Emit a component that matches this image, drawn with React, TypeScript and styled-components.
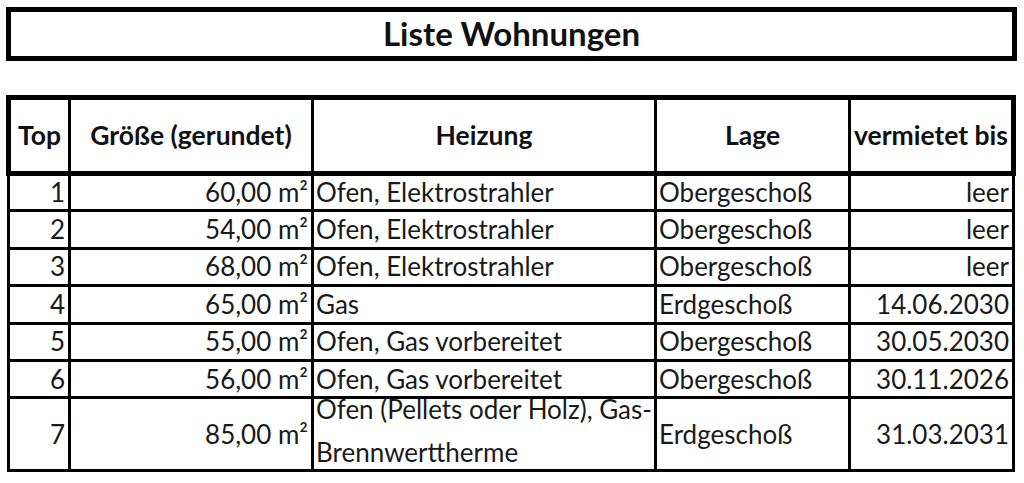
import React from "react";
import styled, { createGlobalStyle } from "styled-components";

const GlobalStyle = createGlobalStyle`
  html, body {
    margin: 0;
    padding: 0;
    background: #ffffff;
  }
  body {
    font-family: Lato, "Open Sans", "Liberation Sans", sans-serif;
    color: #111111;
  }
`;

const Page = styled.div`
  width: 1024px;
  height: 483px;
  box-sizing: border-box;
  padding: 7px 0 0 6px;
  display: flex;
  flex-direction: column;
  gap: 34px;
  overflow: hidden;
`;

const TitleBox = styled.div`
  box-sizing: border-box;
  width: 1011px;
  height: 54px;
  border: 5px solid #000;
  display: flex;
  align-items: center;
  justify-content: center;
  font-weight: 700;
  font-size: 33px;
  line-height: 1.2;
  color: #111;
`;

const Table = styled.table`
  border-collapse: collapse;
  table-layout: fixed;
  width: 1005px;
  margin-left: 0;
  font-size: 26px;
  line-height: 1.2;
`;

const HeadRow = styled.tr`
  height: 76px;
`;

const HeadCell = styled.th`
  border: 3px solid #000;
  border-top-width: 5px;
  border-bottom-width: 5px;
  &:first-child {
    border-left-width: 5px;
  }
  &:last-child {
    border-right-width: 5px;
  }
  padding: 0;
  font-size: 26.5px;
  font-weight: 700;
  text-align: center;
  vertical-align: middle;
  white-space: nowrap;
  color: #111;
`;

const Row = styled.tr<{ $tall?: boolean }>`
  height: ${(p) => (p.$tall ? "73px" : "37.4px")};
`;

const Cell = styled.td<{ $align: "left" | "right" }>`
  border: 3px solid #000;
  padding: ${(p) => (p.$align === "right" ? "0 3px 0 0" : "0 0 0 2px")};
  text-align: ${(p) => p.$align};
  vertical-align: middle;
  white-space: nowrap;
  overflow: visible;
  color: #1a1a1a;
`;

const WrapText = styled.div`
  line-height: 43px;
  margin: -12px 0 -6px;
`;

type Flat = {
  top: string;
  size: string;
  heating: string[];
  floor: string;
  until: string;
};

const rows: Flat[] = [
  { top: "1", size: "60,00 m²", heating: ["Ofen, Elektrostrahler"], floor: "Obergeschoß", until: "leer" },
  { top: "2", size: "54,00 m²", heating: ["Ofen, Elektrostrahler"], floor: "Obergeschoß", until: "leer" },
  { top: "3", size: "68,00 m²", heating: ["Ofen, Elektrostrahler"], floor: "Obergeschoß", until: "leer" },
  { top: "4", size: "65,00 m²", heating: ["Gas"], floor: "Erdgeschoß", until: "14.06.2030" },
  { top: "5", size: "55,00 m²", heating: ["Ofen, Gas vorbereitet"], floor: "Obergeschoß", until: "30.05.2030" },
  { top: "6", size: "56,00 m²", heating: ["Ofen, Gas vorbereitet"], floor: "Obergeschoß", until: "30.11.2026" },
  {
    top: "7",
    size: "85,00 m²",
    heating: ["Ofen (Pellets oder Holz), Gas-", "Brennwerttherme"],
    floor: "Erdgeschoß",
    until: "31.03.2031",
  },
];

export default function App() {
  return (
    <>
      <GlobalStyle />
      <Page>
        <TitleBox>Liste Wohnungen</TitleBox>
        <Table>
          <colgroup>
            <col style={{ width: "61px" }} />
            <col style={{ width: "243px" }} />
            <col style={{ width: "343px" }} />
            <col style={{ width: "194px" }} />
            <col style={{ width: "164px" }} />
          </colgroup>
          <thead>
            <HeadRow>
              <HeadCell>Top</HeadCell>
              <HeadCell>Größe (gerundet)</HeadCell>
              <HeadCell>Heizung</HeadCell>
              <HeadCell>Lage</HeadCell>
              <HeadCell>vermietet bis</HeadCell>
            </HeadRow>
          </thead>
          <tbody>
            {rows.map((r) => (
              <Row key={r.top} $tall={r.heating.length > 1}>
                <Cell $align="right">{r.top}</Cell>
                <Cell $align="right">{r.size}</Cell>
                <Cell $align="left">
                  {r.heating.length > 1 ? (
                    <WrapText>
                      {r.heating.map((line, i) => (
                        <React.Fragment key={i}>
                          {i > 0 && <br />}
                          {line}
                        </React.Fragment>
                      ))}
                    </WrapText>
                  ) : (
                    r.heating[0]
                  )}
                </Cell>
                <Cell $align="left">{r.floor}</Cell>
                <Cell $align="right">{r.until}</Cell>
              </Row>
            ))}
          </tbody>
        </Table>
      </Page>
    </>
  );
}
